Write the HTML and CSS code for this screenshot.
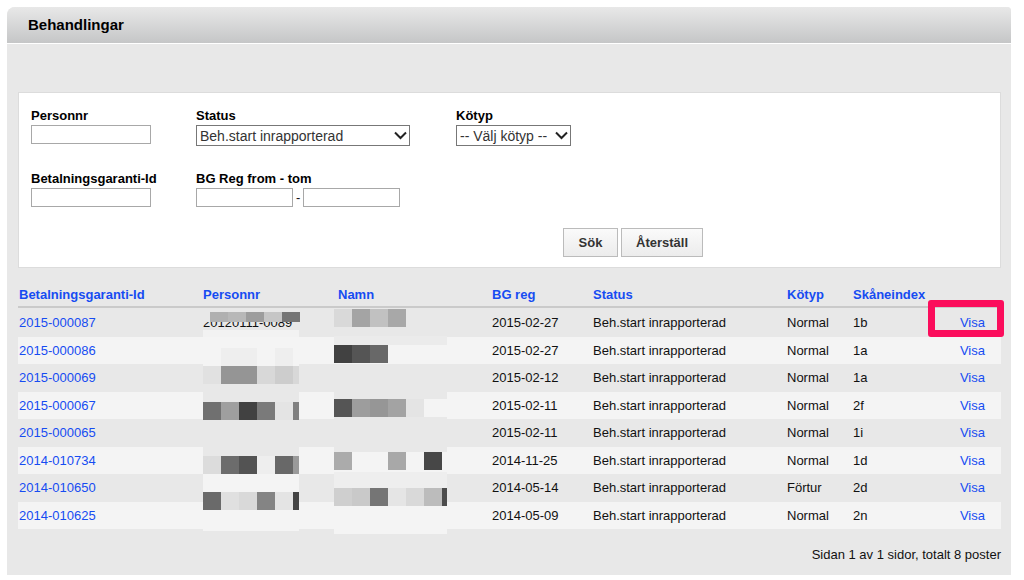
FILE: index.html
```html
<!DOCTYPE html>
<html lang="sv">
<head>
<meta charset="utf-8">
<title>Behandlingar</title>
<link rel="stylesheet" href="styles.css">
</head>
<body>
<main class="panel">
  <header class="panel-header"><h1 class="panel-title">Behandlingar</h1></header>
  <div class="panel-body">
    <form class="filter">
      <div class="filter-grid">
        <div class="field">
          <label for="personnr">Personnr</label>
          <input class="text-input" id="personnr" type="text">
        </div>
        <div class="field">
          <label for="status">Status</label>
          <div class="select-wrap select-status">
            <select id="status"><option>Beh.start inrapporterad</option></select>
            <svg class="chevron" viewBox="0 0 13 9" aria-hidden="true"><path d="M1 1.500 6.500 7 12 1.500"/></svg>
          </div>
        </div>
        <div class="field">
          <label for="kotyp">Kötyp</label>
          <div class="select-wrap select-kotyp">
            <select id="kotyp"><option>-- Välj kötyp --</option></select>
            <svg class="chevron" viewBox="0 0 13 9" aria-hidden="true"><path d="M1 1.500 6.500 7 12 1.500"/></svg>
          </div>
        </div>
        <div class="field">
          <label for="bgid">Betalningsgaranti-Id</label>
          <input class="text-input" id="bgid" type="text">
        </div>
        <div class="field">
          <label for="from">BG Reg from - tom</label>
          <div class="range">
            <input class="text-input date-input" id="from" type="text">
            <span>-</span>
            <input class="text-input date-input" type="text" aria-label="BG Reg tom">
          </div>
        </div>
      </div>
      <div class="actions">
        <button class="btn" type="button">Sök</button>
        <button class="btn" type="button">Återställ</button>
      </div>
    </form>

    <div class="results">
      <table class="table">
        <colgroup>
          <col class="col-id"><col class="col-pnr"><col class="col-name"><col class="col-date"><col class="col-status"><col class="col-type"><col class="col-index"><col>
        </colgroup>
        <thead>
          <tr>
            <th><a href="#">Betalningsgaranti-Id</a></th><th><a href="#">Personnr</a></th><th><a href="#">Namn</a></th><th><a href="#">BG reg</a></th><th><a href="#">Status</a></th><th><a href="#">Kötyp</a></th><th><a href="#">Skåneindex</a></th><th></th>
          </tr>
        </thead>
        <tbody>
          <tr><td><a href="#">2015-000087</a></td><td>20120111-0089</td><td></td><td>2015-02-27</td><td>Beh.start inrapporterad</td><td>Normal</td><td>1b</td><td class="show"><a href="#">Visa</a></td></tr>
          <tr><td><a href="#">2015-000086</a></td><td></td><td></td><td>2015-02-27</td><td>Beh.start inrapporterad</td><td>Normal</td><td>1a</td><td class="show"><a href="#">Visa</a></td></tr>
          <tr><td><a href="#">2015-000069</a></td><td></td><td></td><td>2015-02-12</td><td>Beh.start inrapporterad</td><td>Normal</td><td>1a</td><td class="show"><a href="#">Visa</a></td></tr>
          <tr><td><a href="#">2015-000067</a></td><td></td><td></td><td>2015-02-11</td><td>Beh.start inrapporterad</td><td>Normal</td><td>2f</td><td class="show"><a href="#">Visa</a></td></tr>
          <tr><td><a href="#">2015-000065</a></td><td></td><td></td><td>2015-02-11</td><td>Beh.start inrapporterad</td><td>Normal</td><td>1i</td><td class="show"><a href="#">Visa</a></td></tr>
          <tr><td><a href="#">2014-010734</a></td><td></td><td></td><td>2014-11-25</td><td>Beh.start inrapporterad</td><td>Normal</td><td>1d</td><td class="show"><a href="#">Visa</a></td></tr>
          <tr><td><a href="#">2014-010650</a></td><td></td><td></td><td>2014-05-14</td><td>Beh.start inrapporterad</td><td>Förtur</td><td>2d</td><td class="show"><a href="#">Visa</a></td></tr>
          <tr><td><a href="#">2014-010625</a></td><td></td><td></td><td>2014-05-09</td><td>Beh.start inrapporterad</td><td>Normal</td><td>2n</td><td class="show"><a href="#">Visa</a></td></tr>
        </tbody>
      </table>

      <svg class="mosaic" viewBox="203 308 244 226" shape-rendering="crispEdges" aria-hidden="true">
        <!-- Personnr -->
        <path fill="#e8e8e8" d="M203 312h7v10h-7z"/><path fill="#b0b0b0" d="M210 312h18v10h-18z"/><path fill="#b8b8b8" d="M228 312h18v10h-18z"/><path fill="#9d9d9d" d="M246 312h18v10h-18z"/><path fill="#c6c6c6" d="M264 312h18v10h-18z"/><path fill="#757575" d="M282 312h18v10h-18z"/>
        <path fill="#f2f2f2" d="M203 330h96v7h-96z"/>
        <path fill="#f4f4f4" d="M203 348h96v18h-96z"/><path fill="#eeeeee" d="M221 348h36v18h-36zM275 348h18v18h-18z"/>
        <path fill="#e1e1e1" d="M203 366h18v18h-18z"/><path fill="#959595" d="M221 366h36v18h-36z"/><path fill="#d8d8d8" d="M257 366h42v18h-42z"/><path fill="#cdcdcd" d="M275 366h18v18h-18z"/>
        <path fill="#e8e8e8" d="M203 384h96v18h-96z"/>
        <path fill="#707070" d="M203 402h18v18h-18z"/><path fill="#9f9f9f" d="M221 402h18v18h-18z"/><path fill="#414141" d="M239 402h18v18h-18z"/><path fill="#7a7a7a" d="M257 402h18v18h-18z"/><path fill="#e4e4e4" d="M275 402h18v18h-18z"/><path fill="#808080" d="M293 402h6v18h-6z"/>
        <path fill="#e8e8e8" d="M203 446h96v10h-96z"/>
        <path fill="#dcdcdc" d="M203 456h18v18h-18z"/><path fill="#6c6c6c" d="M221 456h18v18h-18z"/><path fill="#535353" d="M239 456h18v18h-18z"/><path fill="#eeeeee" d="M257 456h18v18h-18z"/><path fill="#686868" d="M275 456h18v18h-18z"/><path fill="#9a9a9a" d="M293 456h6v18h-6z"/>
        <path fill="#f4f4f4" d="M203 474h96v18h-96z"/>
        <path fill="#6a6a6a" d="M203 492h18v18h-18z"/><path fill="#e0e0e0" d="M221 492h18v18h-18z"/><path fill="#d9d9d9" d="M239 492h18v18h-18z"/><path fill="#848484" d="M257 492h18v18h-18z"/><path fill="#e4e4e4" d="M275 492h18v18h-18z"/><path fill="#444444" d="M293 492h6v18h-6z"/>
        <path fill="#f4f4f4" d="M203 510h96v21h-96z"/>
        <!-- Namn -->
        <path fill="#d9d9d9" d="M334 309h18v18h-18z"/><path fill="#a4a4a4" d="M352 309h18v18h-18z"/><path fill="#c1c1c1" d="M370 309h18v18h-18z"/><path fill="#a8a8a8" d="M388 309h18v18h-18z"/>
        <path fill="#ebebeb" d="M334 336h113v9h-113z"/>
        <path fill="#414141" d="M334 345h18v18h-18z"/><path fill="#555555" d="M352 345h18v18h-18z"/><path fill="#686868" d="M370 345h18v18h-18z"/>
        <path fill="#e8e8e8" d="M334 391h113v8h-113z"/>
        <path fill="#555555" d="M334 399h18v18h-18z"/><path fill="#9d9d9d" d="M352 399h18v18h-18z"/><path fill="#969696" d="M370 399h18v18h-18z"/><path fill="#a3a3a3" d="M388 399h18v18h-18z"/><path fill="#e4e4e4" d="M406 399h18v18h-18z"/>
        <path fill="#e8e8e8" d="M334 417h113v35h-113z"/>
        <path fill="#f4f4f4" d="M334 452h113v18h-113z"/><path fill="#ababab" d="M334 452h18v18h-18z"/><path fill="#a8a8a8" d="M388 452h18v18h-18z"/><path fill="#474747" d="M424 452h18v18h-18z"/>
        <path fill="#eeeeee" d="M334 472h113v16h-113z"/>
        <path fill="#cfcfcf" d="M334 488h18v18h-18z"/><path fill="#c9c9c9" d="M352 488h18v18h-18z"/><path fill="#757575" d="M370 488h18v18h-18z"/><path fill="#e5e5e5" d="M388 488h18v18h-18z"/><path fill="#d9d9d9" d="M406 488h18v18h-18z"/><path fill="#bcbcbc" d="M424 488h18v18h-18z"/><path fill="#4c4c4c" d="M442 488h5v18h-5z"/>
        <path fill="#f4f4f4" d="M334 506h113v28h-113z"/>
      </svg>
      <div class="highlight"></div>
    </div>
    <p class="paging">Sidan 1 av 1 sidor, totalt 8 poster</p>
  </div>
</main>
</body>
</html>
```
FILE: styles.css
```css
* { box-sizing: border-box; }
body {
  margin: 0;
  padding: 7px 13px 5px 7px;
  background: #fff;
  color: #111;
  font: 13px/16px "Liberation Sans", Arial, sans-serif;
}
a { color: #164cf2; text-decoration: none; }
.panel { background: #e8e8e8; border-radius: 8px 4px 0 0; overflow: hidden; }
.panel-header {
  height: 37px;
  padding: 0 21px;
  display: flex;
  align-items: center;
  background: linear-gradient(#e8e8e8, #c5c6c7);
  border-bottom: 1px solid #fff;
}
.panel-title { margin: 0; font-size: 15px; line-height: 20px; color: #000; }
.panel-body { padding: 48px 10px 12px 11px; }

.filter {
  padding: 15px 12px 10px;
  background: #fff;
  border: 1px solid #dcdcdc;
}
.filter-grid {
  display: grid;
  grid-template-columns: 165px 260px 1fr;
  grid-template-rows: 63px 57px;
}
.field { display: flex; flex-direction: column; align-items: flex-start; gap: 1px; }
.field label { font-weight: bold; color: #000; }
.text-input {
  width: 120px;
  height: 19px;
  padding: 0 3px;
  border: 1px solid #a8a8a8;
  border-radius: 0;
  background: #fff;
  font: inherit;
}
.range { display: flex; align-items: center; gap: 3px; }
.date-input { width: 97px; }
.select-wrap { position: relative; }
.select-status { width: 214px; }
.select-kotyp { width: 115px; }
.select-wrap select {
  display: block;
  width: 100%;
  height: 21px;
  padding: 0 3px;
  appearance: none;
  border: 1px solid #777;
  border-radius: 0;
  background: #fff;
  color: #333;
  font: 14px/18px "Liberation Sans", Arial, sans-serif;
}
.chevron {
  position: absolute;
  right: 3px;
  top: 6px;
  width: 13px;
  height: 9px;
  fill: none;
  stroke: #222;
  stroke-width: 2;
  pointer-events: none;
}
.actions { display: flex; gap: 3px; padding-left: 532px; }
.btn {
  min-width: 55px;
  height: 29px;
  padding: 0 14px;
  border: 1px solid #bbb;
  background: linear-gradient(#fafafa, #ececec);
  color: #333;
  font: bold 13px/16px "Liberation Sans", Arial, sans-serif;
}

.results { position: relative; margin-top: 17px; }
.table { width: 100%; table-layout: fixed; border-collapse: separate; border-spacing: 0; }
.col-id { width: 184px; }
.col-pnr { width: 135px; }
.col-name { width: 154px; }
.col-date { width: 101px; }
.col-status { width: 194px; }
.col-type { width: 66px; }
.col-index { width: 80px; }
.table th, .table td { padding: 0 0 0 1px; text-align: left; white-space: nowrap; }
.table th { height: 23px; padding-bottom: 2px; border-bottom: 2px solid #cacaca; }
.table td { height: 28px; }
.table tbody tr:nth-child(even) { background: #f4f4f4; }
.table tbody tr:nth-child(even) td { height: 27px; }
.table tbody tr:first-child td { height: 29px; }
.table .show { padding-right: 16px; text-align: right; }
.mosaic { position: absolute; left: 185px; top: 23px; width: 244px; height: 226px; }
.highlight {
  position: absolute;
  right: -3px;
  top: 15px;
  width: 76px;
  height: 37px;
  border: 7px solid #fb0d5c;
  border-radius: 3px;
  pointer-events: none;
}
.paging { margin: 18px 0 0; text-align: right; }
```
